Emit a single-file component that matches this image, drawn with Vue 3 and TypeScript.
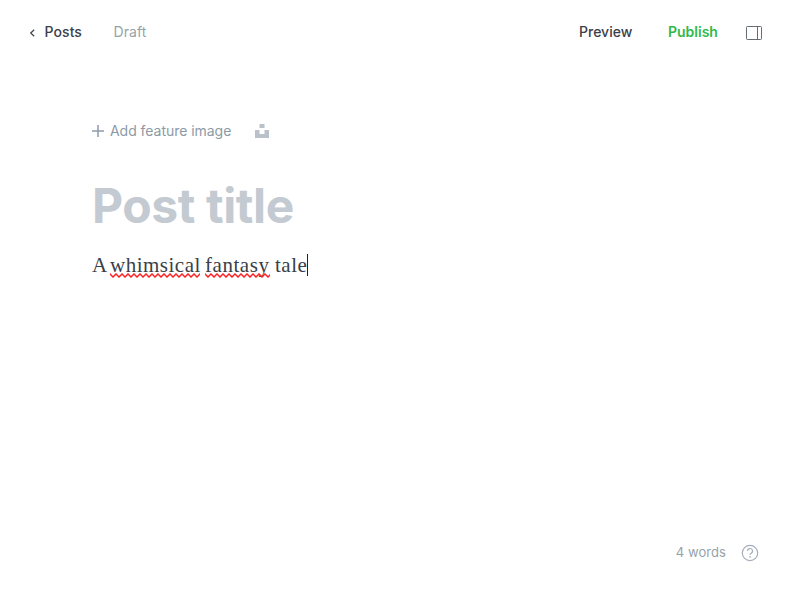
<script setup lang="ts">
import { computed } from 'vue'

interface Word {
  text: string
  kind: string
  misspelled: boolean
}

const words: Word[] = [
  { text: 'A', kind: 'w-a', misspelled: false },
  { text: 'whimsical', kind: 'w-whimsical', misspelled: true },
  { text: 'fantasy', kind: 'w-fantasy', misspelled: true },
  { text: 'tale', kind: 'w-tale', misspelled: false },
]
const wordCount = computed<string>(() => `${words.length} words`)
</script>

<template>
  <div class="editor">
    <header class="bar">
      <a class="back">
        <svg class="chevron" width="6" height="8" viewBox="0 0 6 8"><path d="M5.2.7 1.7 4l3.5 3.3" /></svg>
        <span>Posts</span>
      </a>
      <span class="status">Draft</span>
      <nav class="actions">
        <a class="preview">Preview</a>
        <a class="publish">Publish</a>
        <svg class="panel" width="16" height="14" viewBox="0 0 16 14">
          <rect x=".5" y=".5" width="15" height="13" rx=".8" />
          <path d="M11.5.5v13" />
        </svg>
      </nav>
    </header>
    <main class="content">
      <div class="feature">
        <svg class="plus" width="12" height="12" viewBox="0 0 12 12"><path d="M6 0v12M0 6h12" /></svg>
        <span class="add">Add feature image</span>
        <svg class="unsplash" width="14" height="14" viewBox="0 0 14 14">
          <path d="M4.5 0h5v4h-5zM0 6h4.5v4h5V6H14v8H0z" />
        </svg>
      </div>
      <h1 class="title">Post title</h1>
      <p class="body">
        <span v-for="word in words" :key="word.text" class="word" :class="word.kind">{{ word.text }}<svg v-if="word.misspelled" class="squiggle" height="5">
          <defs>
            <pattern :id="word.kind" width="6" height="5" patternUnits="userSpaceOnUse">
              <path d="M-1.5 2.5 0 1 3 4 6 1 7.5 2.5" />
            </pattern>
          </defs>
          <rect width="100%" height="5" :fill="`url(#${word.kind})`" />
        </svg></span>
        <span class="caret"></span>
      </p>
    </main>
    <footer class="foot">
      <span class="count">{{ wordCount }}</span>
      <svg class="help" width="18" height="18" viewBox="0 0 18 18">
        <circle cx="9" cy="9" r="7.7" />
        <path d="M6.5 7.1a2.5 2.5 0 1 1 3.7 2.1c-.9.5-1.2.9-1.2 1.8" />
        <circle class="dot" cx="9" cy="12.9" r=".8" />
      </svg>
    </footer>
  </div>
</template>

<style>
body {
  background: #fff;
}
</style>

<style scoped>
.editor {
  display: flex;
  flex-direction: column;
  box-sizing: border-box;
  width: 800px;
  height: 600px;
  background: #fff;
  color: #394047;
  font: 14px/20px Inter, sans-serif;
}
svg {
  display: block;
  flex: none;
  fill: none;
}
.bar {
  display: flex;
  align-items: center;
  height: 20px;
  padding: 22px 38px 0 29px;
}
.back {
  display: flex;
  align-items: center;
  width: 84.5px;
  gap: 9.5px;
  font-weight: 500;
  letter-spacing: 0.08px;
}
.chevron {
  margin-top: 2px;
  stroke: #394047;
  stroke-width: 1.2;
}
.status {
  color: #95a3ab;
  letter-spacing: 0.08px;
}
.actions {
  display: flex;
  align-items: center;
  margin-left: auto;
}
.preview {
  width: 89px;
  font-weight: 500;
}
.publish {
  width: 78px;
  color: #30b94a;
  font-weight: 600;
}
.panel {
  margin-top: 2px;
  stroke: #666c73;
}
.content {
  flex: 1;
  padding: 79px 92px 0;
}
.feature {
  display: flex;
  align-items: center;
  height: 20px;
  color: #8c9ba6;
}
.plus {
  margin-right: 6px;
  stroke: #8e9cac;
  stroke-width: 1.5;
}
.add {
  width: 145px;
  letter-spacing: -0.04px;
}
.unsplash path {
  fill: #bac1c8;
}
.title {
  margin: 35px 0 0;
  color: #c3cad1;
  font-size: 48px;
  font-weight: 700;
  line-height: 60px;
  letter-spacing: -0.4px;
}
.body {
  display: flex;
  margin: 16px 0 0;
  font: 21px/26px Georgia, "Liberation Serif", serif;
}
.word {
  display: flex;
  flex-direction: column;
  height: 26px;
  white-space: nowrap;
}
.w-a {
  width: 18px;
}
.w-whimsical {
  width: 95px;
  letter-spacing: 0.5px;
}
.w-fantasy {
  width: 70px;
  letter-spacing: 0.55px;
}
.w-tale {
  width: 32px;
  letter-spacing: 0.5px;
}
.squiggle {
  width: calc(100% - 5px);
  margin-top: -5px;
}
.squiggle path {
  stroke: #f22;
  stroke-width: 1.5;
}
.caret {
  width: 1px;
  height: 22px;
  margin-top: 2px;
  background: #222;
}
.foot {
  display: flex;
  align-items: center;
  justify-content: flex-end;
  height: 20px;
  padding: 0 41px 38px 0;
  color: #95a3ab;
  font-size: 13px;
}
.count {
  margin-right: 15px;
  letter-spacing: 0.06px;
}
.help {
  margin-top: 1px;
  stroke: #a6aebb;
  stroke-width: 1.2;
}
.dot {
  fill: #a6aebb;
  stroke: none;
}
</style>
